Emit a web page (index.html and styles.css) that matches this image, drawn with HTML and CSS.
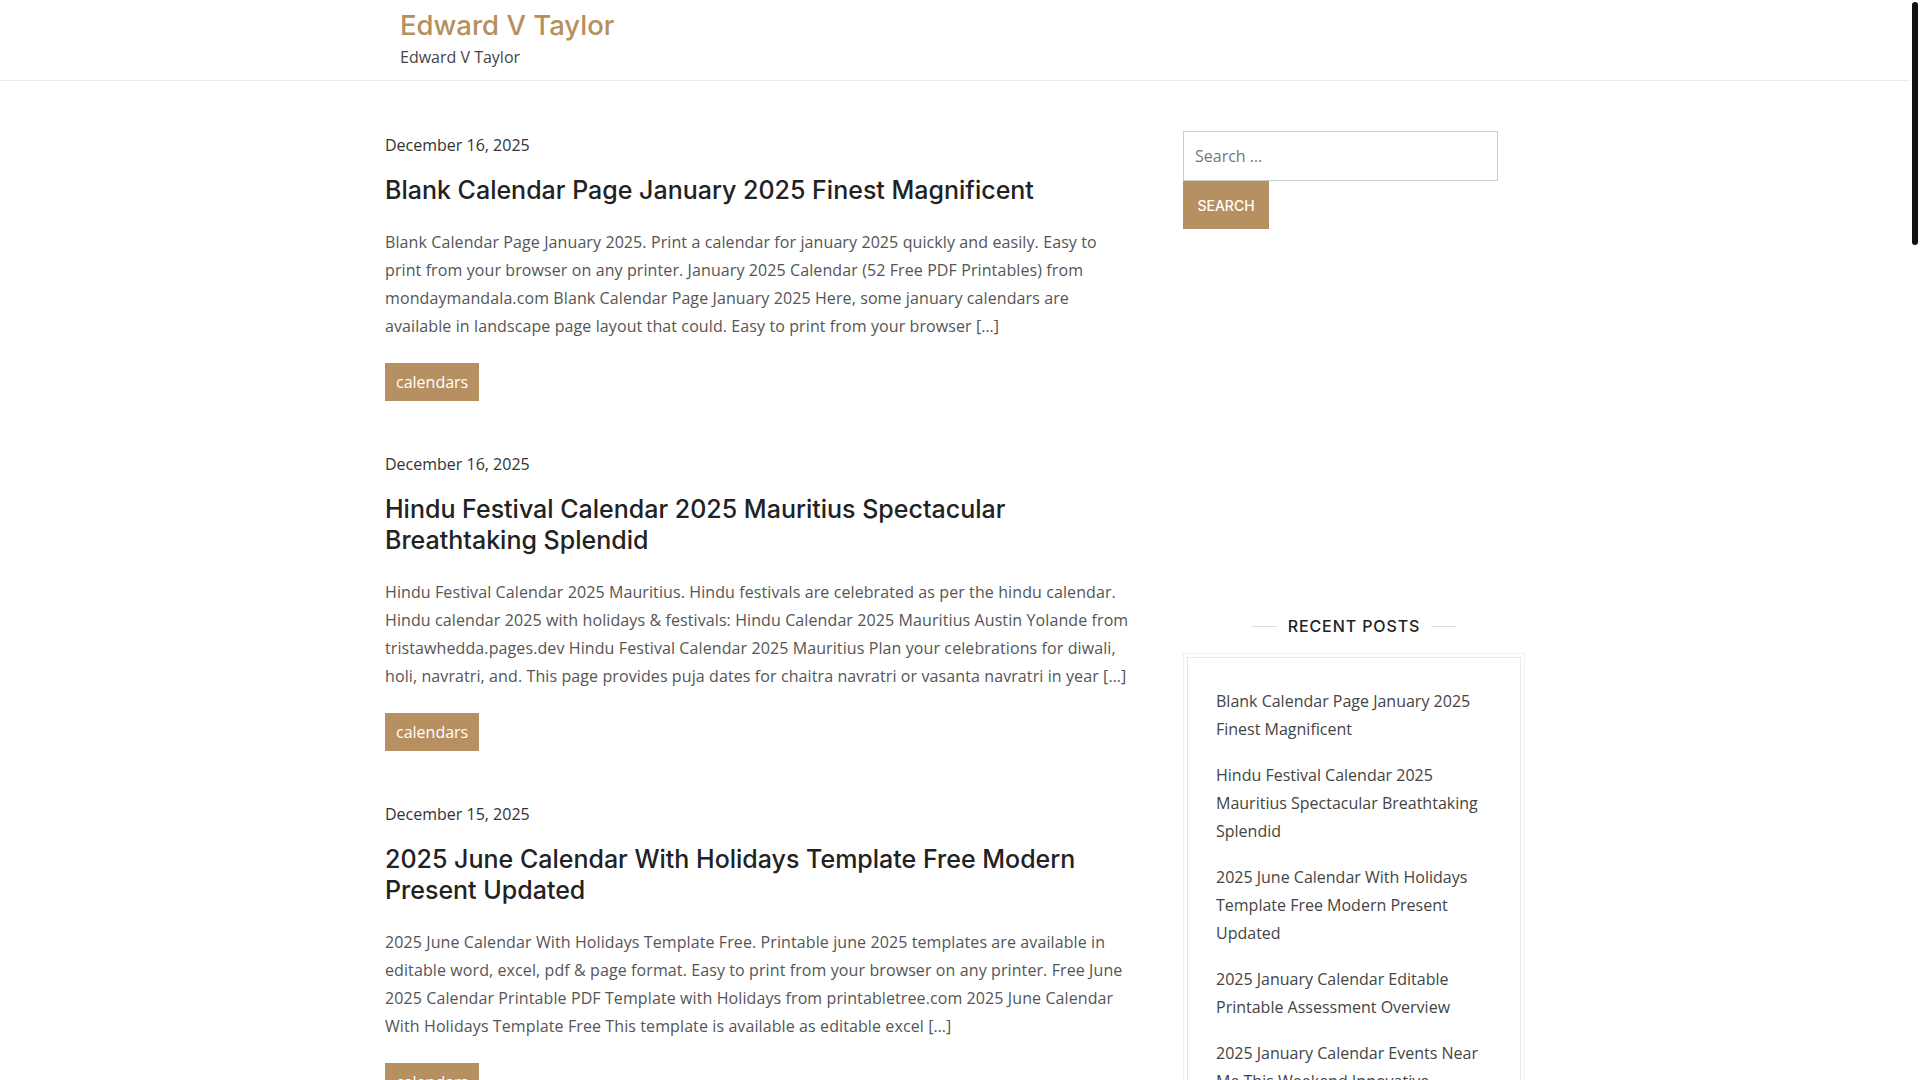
FILE: index.html
```html
<!DOCTYPE html>
<html lang="en">
<head>
<meta charset="utf-8">
<title>Edward V Taylor</title>
<link rel="stylesheet" href="styles.css">
</head>
<body>
<div class="page">
  <header class="site-header">
    <div class="header-inner">
      <div class="site-title">Edward V Taylor</div>
      <div class="site-tagline">Edward V Taylor</div>
    </div>
  </header>

  <div class="container">
    <main class="main">
      <article class="post">
        <div class="post-date">December 16, 2025</div>
        <h2 class="post-title">Blank Calendar Page January 2025 Finest Magnificent</h2>
        <p class="post-excerpt">Blank Calendar Page January 2025. Print a calendar for january 2025 quickly and easily. Easy to print from your browser on any printer. January 2025 Calendar (52 Free PDF Printables) from mondaymandala.com Blank Calendar Page January 2025 Here, some january calendars are available in landscape page layout that could. Easy to print from your browser […]</p>
        <a class="post-tag">calendars</a>
      </article>

      <article class="post">
        <div class="post-date">December 16, 2025</div>
        <h2 class="post-title">Hindu Festival Calendar 2025 Mauritius Spectacular Breathtaking Splendid</h2>
        <p class="post-excerpt">Hindu Festival Calendar 2025 Mauritius. Hindu festivals are celebrated as per the hindu calendar. Hindu calendar 2025 with holidays &amp; festivals: Hindu Calendar 2025 Mauritius Austin Yolande from tristawhedda.pages.dev Hindu Festival Calendar 2025 Mauritius Plan your celebrations for diwali, holi, navratri, and. This page provides puja dates for chaitra navratri or vasanta navratri in year […]</p>
        <a class="post-tag">calendars</a>
      </article>

      <article class="post">
        <div class="post-date">December 15, 2025</div>
        <h2 class="post-title">2025 June Calendar With Holidays Template Free Modern Present Updated</h2>
        <p class="post-excerpt">2025 June Calendar With Holidays Template Free. Printable june 2025 templates are available in editable word, excel, pdf &amp; page format. Easy to print from your browser on any printer. Free June 2025 Calendar Printable PDF Template with Holidays from printabletree.com 2025 June Calendar With Holidays Template Free This template is available as editable excel […]</p>
        <a class="post-tag">calendars</a>
      </article>
    </main>

    <aside class="sidebar">
      <form class="search-form">
        <input class="search-field" type="search" placeholder="Search …">
        <button class="search-submit" type="button">Search</button>
      </form>

      <section class="widget">
        <h3 class="widget-title">Recent Posts</h3>
        <div class="recent-box">
          <ul class="recent-list">
            <li>Blank Calendar Page January 2025 Finest Magnificent</li>
            <li>Hindu Festival Calendar 2025 Mauritius Spectacular Breathtaking Splendid</li>
            <li>2025 June Calendar With Holidays Template Free Modern Present Updated</li>
            <li>2025 January Calendar Editable Printable Assessment Overview</li>
            <li>2025 January Calendar Events Near Me This Weekend Innovative</li>
          </ul>
        </div>
      </section>
    </aside>
  </div>
</div>
<div class="scrollbar"><div class="scrollbar-thumb"></div></div>
</body>
</html>
```

FILE: styles.css
```css
html {
  overflow: hidden;
}
body {
  margin: 0;
  background: #fff;
  font-family: "Open Sans", "Liberation Sans", sans-serif;
  color: #333;
}
.page {
  width: 1910px;
}
.site-header {
  height: 80px;
  border-bottom: 1px solid #eaeaea;
  box-sizing: content-box;
}
.header-inner {
  width: 1140px;
  margin: 0 auto;
  padding: 7px 0 0 15px;
  box-sizing: border-box;
}
.site-title {
  font-family: "Inter", "Open Sans", sans-serif;
  font-size: 27.5px;
  line-height: 36px;
  font-weight: 500;
  color: #b68f5f;
}
.site-tagline {
  margin-top: 2px;
  font-size: 16px;
  line-height: 24px;
  color: #444;
}
.container {
  width: 1140px;
  margin: 0 auto;
  display: grid;
  grid-template-columns: 750px 342px;
  column-gap: 48px;
}
.main {
  padding-top: 52px;
}
.post {
  margin-bottom: 51px;
}
.post-date {
  font-size: 16px;
  line-height: 24px;
  color: #333;
}
.post-title {
  margin: 18px 0 0;
  font-family: "Inter", "Open Sans", sans-serif;
  font-size: 25px;
  line-height: 31px;
  font-weight: 500;
  color: #222;
}
.post-excerpt {
  margin: 22px 0 0;
  font-size: 16px;
  line-height: 28px;
  letter-spacing: 0.1px;
  color: #555;
}
.post-tag {
  display: inline-block;
  margin-top: 23px;
  height: 38px;
  line-height: 38px;
  padding: 0 11px;
  background: #b69060;
  color: #fff;
  font-size: 16px;
}
.sidebar {
  padding-top: 50px;
}
.search-form {
  display: flex;
  flex-direction: column;
  align-items: flex-start;
}
.search-field {
  width: 315px;
  height: 50px;
  box-sizing: border-box;
  border: 1px solid #ccc;
  padding: 0 11px;
  font-family: inherit;
  font-size: 16px;
  color: #777;
  outline: none;
  -webkit-appearance: none;
  border-radius: 0;
  margin: 0;
}
.search-field::placeholder {
  color: #777;
}
.search-submit {
  height: 48px;
  width: 86px;
  padding: 0;
  border: 0;
  border-radius: 0;
  background: #b69060;
  color: #fff;
  font-family: "Inter", "Open Sans", sans-serif;
  font-size: 14px;
  font-weight: 500;
  text-transform: uppercase;
  margin: 0;
}
.widget {
  margin-top: 385px;
}
.widget-title {
  display: flex;
  align-items: center;
  justify-content: center;
  gap: 11px;
  margin: 0;
  font-family: "Inter", "Open Sans", sans-serif;
  font-size: 16px;
  line-height: 24px;
  font-weight: 500;
  letter-spacing: 0.9px;
  text-transform: uppercase;
  color: #222;
}
.widget-title::before,
.widget-title::after {
  content: "";
  width: 25px;
  height: 1px;
  background: #ddd;
}
.recent-box {
  margin-top: 15px;
  border: 1px solid #f0f0f0;
  padding: 3px;
}
.recent-list {
  list-style: none;
  margin: 0;
  border: 1px solid #e8e8e8;
  padding: 29px 28px;
}
.recent-list li {
  font-size: 16px;
  line-height: 28px;
  color: #444;
  margin-bottom: 18px;
}
.scrollbar {
  position: fixed;
  top: 0;
  right: 0;
  width: 10px;
  height: 100%;
  background: #fff;
}
.scrollbar-thumb {
  position: absolute;
  top: 2px;
  left: 2px;
  width: 6px;
  height: 243px;
  border-radius: 3px;
  background: #111;
}
```
